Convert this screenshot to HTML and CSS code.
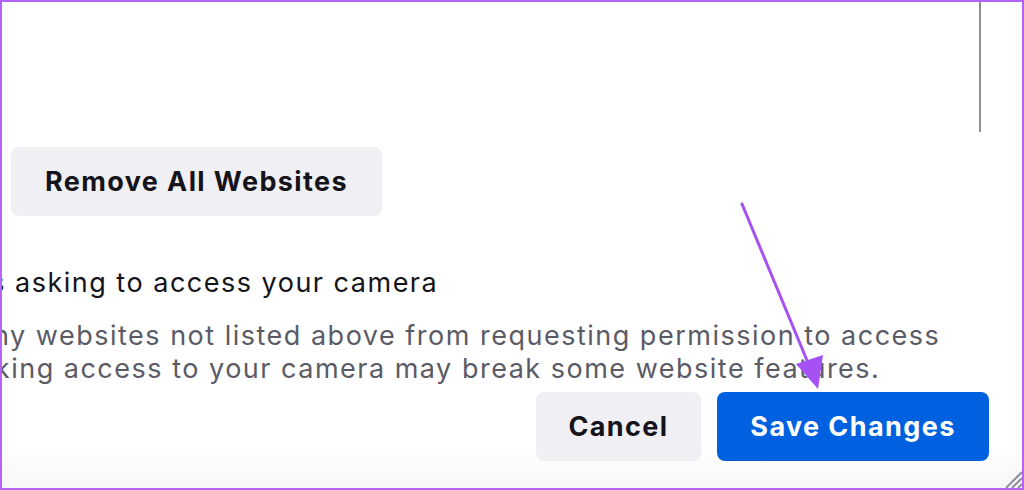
FILE: index.html
```html
<!DOCTYPE html>
<html lang="en">
<head>
    <meta charset="UTF-8">
    <meta name="viewport" content="width=device-width, initial-scale=1.0">
    <title>Settings - Camera Permissions</title>
    <link rel="stylesheet" href="styles.css">
</head>
<body>
    <div class="frame">
        <div class="site-list"></div>
        <button class="remove-btn">Remove All Websites</button>
        <div class="block-option">
            <label class="block-label">Block new requests asking to access your camera</label>
            <p class="block-desc">This will prevent any websites not listed above from requesting permission to access your camera. Blocking access to your camera may break some website features.</p>
        </div>
        <div class="dialog-footer">
            <button class="btn btn-cancel">Cancel</button>
            <button class="btn btn-save">Save Changes</button>
        </div>
        <svg class="grip" width="20" height="20" viewBox="0 0 20 20">
            <line x1="20" y1="4" x2="4" y2="20" stroke="#8f8f9d" stroke-width="2"/>
            <line x1="20" y1="10" x2="10" y2="20" stroke="#8f8f9d" stroke-width="2"/>
            <line x1="20" y1="16" x2="16" y2="20" stroke="#8f8f9d" stroke-width="2"/>
        </svg>
        <svg class="arrow" width="1024" height="490" viewBox="0 0 1024 490">
            <line x1="742" y1="204" x2="811" y2="370" stroke="#a551f4" stroke-width="3" stroke-linecap="round"/>
            <polygon points="796,364 823,355 818,389" fill="#a551f4"/>
        </svg>
    </div>
</body>
</html>
```

FILE: styles.css
```css
body {
    margin: 0;
    padding: 0;
    background-color: #fff;
    font-family: Inter, "Noto Sans", sans-serif;
}

.frame {
    position: relative;
    width: 1024px;
    height: 490px;
    box-sizing: border-box;
    border: 2px solid #b464f6;
    overflow: hidden;
    background: linear-gradient(to bottom, #fff 0, #fff 442px, #f7f7f9 486px);
}

.site-list {
    width: 977px;
    height: 130px;
    border-right: 2px solid #8e8e96;
}

.remove-btn {
    display: block;
    margin: 15px 0 0 9px;
    width: 371px;
    height: 69px;
    border: none;
    border-radius: 8px;
    background-color: #f0f0f4;
    color: #15141a;
    font-family: inherit;
    font-size: 27px;
    font-weight: 700;
    letter-spacing: 1.4px;
    padding: 0;
}

.block-option {
    margin-top: 51px;
    font-size: 27px;
    letter-spacing: 1.5px;
}

.block-label {
    display: block;
    margin-left: -273px;
    line-height: 32px;
    color: #15141a;
    white-space: nowrap;
}

.block-desc {
    margin: 20px 0 0 -264px;
    width: 1210px;
    text-indent: -4px;
    line-height: 33px;
    color: #5b5b66;
}

.dialog-footer {
    display: flex;
    justify-content: flex-end;
    gap: 16px;
    margin-top: 7px;
    padding-right: 33px;
}

.btn {
    height: 69px;
    border: none;
    border-radius: 8px;
    font-family: inherit;
    font-size: 27px;
    font-weight: 700;
    letter-spacing: 1.4px;
    padding: 0;
}

.btn-cancel {
    width: 165px;
    background-color: #f0f0f4;
    color: #15141a;
}

.btn-save {
    width: 272px;
    background-color: #0061e0;
    color: #fff;
}

.grip {
    position: absolute;
    right: 0;
    bottom: 0;
}

.arrow {
    position: absolute;
    left: -2px;
    top: -2px;
    pointer-events: none;
}
```
